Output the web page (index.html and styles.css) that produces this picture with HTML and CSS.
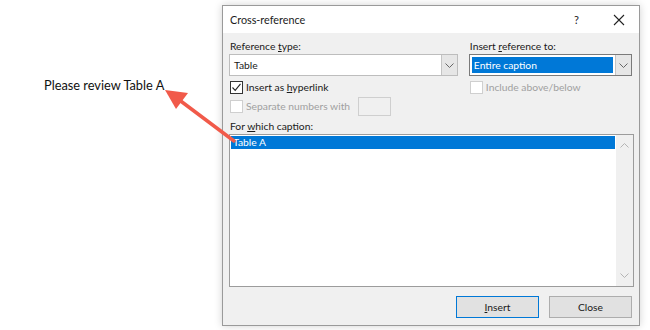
FILE: index.html
```html
<!DOCTYPE html>
<html lang="en">
<head>
  <meta charset="UTF-8" />
  <title>Cross-reference</title>
  <link rel="stylesheet" href="styles.css">
</head>
<body>
  <div class="page">
    <!-- Document text on the left -->
    <div class="note">Please review Table A</div>

    <!-- Cross-reference dialog -->
    <div class="dialog">
      <div class="titlebar">
        <span class="title">Cross-reference</span>
        <span class="help">?</span>
        <svg class="close-x" width="12" height="12" viewBox="0 0 12 12">
          <path d="M1 1 L11 11 M11 1 L1 11" stroke="#222" stroke-width="1.1" fill="none"/>
        </svg>
      </div>

      <div class="content">
        <div class="columns">
          <div class="col-left">
            <div class="label">Reference <u>t</u>ype:</div>
            <div class="combo">
              <span class="combo-text">Table</span>
              <span class="combo-btn"><svg width="9" height="5" viewBox="0 0 9 5"><path d="M0.5 0.5 L4.5 4.5 L8.5 0.5" stroke="#666" fill="none"/></svg></span>
            </div>
            <div class="check-row">
              <span class="box"><svg width="11" height="11" viewBox="0 0 11 11"><path d="M1.5 5.5 L4.2 8.3 L9.5 1.8" stroke="#222" stroke-width="1.1" fill="none"/></svg></span>
              <span>Insert as <u>h</u>yperlink</span>
            </div>
            <div class="check-row disabled sep-row">
              <span class="box"></span>
              <span>Separate numbers with</span>
              <span class="small-input"></span>
            </div>
          </div>
          <div class="col-right">
            <div class="label">Insert <u>r</u>eference to:</div>
            <div class="combo focused">
              <span class="combo-text selected">Entire caption</span>
              <span class="combo-btn"><svg width="9" height="5" viewBox="0 0 9 5"><path d="M0.5 0.5 L4.5 4.5 L8.5 0.5" stroke="#666" fill="none"/></svg></span>
            </div>
            <div class="check-row disabled">
              <span class="box"></span>
              <span>Include above/below</span>
            </div>
          </div>
        </div>

        <div class="label caption-label">For <u>w</u>hich caption:</div>
        <div class="listbox">
          <div class="list-items">
            <div class="list-item selected">Table A</div>
          </div>
          <div class="scrollbar">
            <svg width="9" height="5" viewBox="0 0 9 5"><path d="M0.5 4.5 L4.5 0.5 L8.5 4.5" stroke="#b4b4b4" fill="none"/></svg>
            <svg width="9" height="5" viewBox="0 0 9 5"><path d="M0.5 0.5 L4.5 4.5 L8.5 0.5" stroke="#b4b4b4" fill="none"/></svg>
          </div>
        </div>

        <div class="buttons">
          <button class="btn default"><u>I</u>nsert</button>
          <button class="btn">Close</button>
        </div>
      </div>
    </div>

    <!-- Red annotation arrow -->
    <svg class="arrow" width="650" height="330" viewBox="0 0 650 330">
      <line x1="234" y1="141" x2="178" y2="99" stroke="#f15a4a" stroke-width="3.5" stroke-linecap="round"/>
      <polygon points="165,90 188,93 176,109" fill="#f15a4a"/>
    </svg>
  </div>
</body>
</html>
```

FILE: styles.css
```css
body {
  margin: 0;
  background: #fff;
  font-family: Lato, "Noto Sans", sans-serif;
}
.page {
  position: relative;
  width: 650px;
  height: 330px;
  display: flex;
  padding-top: 5px;
  box-sizing: border-box;
}
.note {
  width: 178px;
  padding: 72px 0 0 44px;
  font-family: Lato, "Open Sans", sans-serif;
  font-size: 12.8px;
  color: #111;
}
.dialog {
  width: 418px;
  height: 321px;
  border: 1px solid #9a9a9a;
  background: #f0f0f0;
  box-shadow: 0 0 8px rgba(0, 0, 0, 0.18);
  box-sizing: border-box;
  display: flex;
  flex-direction: column;
  font-size: 10.3px;
  color: #1a1a1a;
}
.titlebar {
  height: 27px;
  background: #fff;
  display: flex;
  align-items: center;
  padding-left: 7px;
  padding-right: 14px;
}
.title {
  font-size: 10.8px;
  flex: 1;
}
.help {
  font-size: 11px;
  margin-right: 34px;
}
.content {
  padding: 5px 7px 0 6px;
  display: flex;
  flex-direction: column;
}
.columns {
  display: flex;
  gap: 11px;
}
.col-left { width: 230px; }
.col-right { width: 164px; }
.label {
  height: 16px;
  line-height: 16px;
  padding-left: 1px;
}
.combo {
  height: 22px;
  border: 1px solid #bdbdbd;
  background: #fff;
  display: flex;
  box-sizing: border-box;
}
.combo.focused { border-color: #7a7a7a; }
.combo-text {
  flex: 1;
  line-height: 16px;
  margin: 2px;
  padding-left: 2px;
}
.combo-text.selected {
  background: #0078d7;
  color: #fff;
}
.combo-btn {
  width: 15px;
  background: #e6e6e6;
  border-left: 1px solid #c4c4c4;
  display: flex;
  align-items: center;
  justify-content: center;
}
.check-row {
  display: flex;
  align-items: center;
  gap: 3px;
  height: 14px;
  margin-top: 4px;
  padding-left: 1px;
}
.check-row.disabled { color: #a0a0a0; }
.check-row.sep-row { margin-top: 3px; height: 18px; }
.box {
  width: 13px;
  height: 13px;
  border: 1px solid #333;
  background: #fff;
  box-sizing: border-box;
  display: flex;
  align-items: center;
  justify-content: center;
}
.disabled .box { border-color: #cfcfcf; }
.small-input {
  width: 33px;
  height: 19px;
  border: 1px solid #cfcfcf;
  background: #f0f0f0;
  margin-left: 5px;
  box-sizing: border-box;
}
.caption-label { margin-top: 3px; }
.listbox {
  height: 153px;
  width: 405px;
  border: 1px solid #9c9c9c;
  background: #fff;
  box-sizing: border-box;
  display: flex;
}
.list-items {
  flex: 1;
  padding: 1px;
}
.list-item {
  height: 13px;
  line-height: 13px;
  padding-left: 2px;
}
.list-item.selected {
  background: #0078d7;
  color: #fff;
}
.scrollbar {
  width: 17px;
  background: #f0f0f0;
  display: flex;
  flex-direction: column;
  justify-content: space-between;
  align-items: center;
  padding: 8px 0 8px;
}
.buttons {
  display: flex;
  justify-content: flex-end;
  gap: 10px;
  margin-top: 9px;
}
.btn {
  width: 83px;
  height: 22px;
  font-family: inherit;
  font-size: 10.3px;
  color: #1a1a1a;
  background: #e1e1e1;
  border: 1px solid #adadad;
  padding: 0;
}
.btn.default { border-color: #0078d7; }
.arrow {
  position: absolute;
  left: 0;
  top: 0;
  pointer-events: none;
}
```
